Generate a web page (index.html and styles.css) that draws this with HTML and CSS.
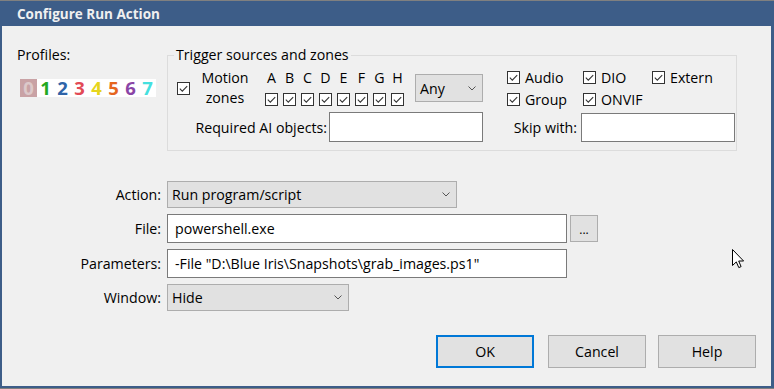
FILE: index.html
```html
<!DOCTYPE html>
<html>
<head>
<meta charset="utf-8">
<title>Configure Run Action</title>
<link rel="stylesheet" href="styles.css">
</head>
<body>
<svg class="defs" width="0" height="0" aria-hidden="true">
  <defs>
    <symbol id="chk" viewBox="0 0 13 13">
      <rect x="0.5" y="0.5" width="12" height="12" fill="#fff" stroke="#333"/>
      <polyline points="2.8,6.6 5.3,9.1 10.2,4.2" fill="none" stroke="#333" stroke-width="1.1"/>
    </symbol>
    <symbol id="chev" viewBox="0 0 8 5">
      <polyline points="0.5,0.5 4,4 7.5,0.5" fill="none" stroke="#555" stroke-width="1"/>
    </symbol>
  </defs>
</svg>
<div class="window">
  <div class="titlebar">Configure Run Action</div>
  <div class="client">
    <div class="top">
      <div class="profiles">
        <div class="profiles-label">Profiles:</div>
        <div class="digits">
          <span class="d d0">0</span><span class="d d1">1</span><span class="d d2">2</span><span class="d d3">3</span><span class="d d4">4</span><span class="d d5">5</span><span class="d d6">6</span><span class="d d7">7</span>
        </div>
      </div>
      <fieldset class="group">
        <legend>Trigger sources and zones</legend>
        <div class="grow1">
          <svg class="cb"><use href="#chk"/></svg>
          <div class="motion-label">Motion<br>zones</div>
          <div class="zones">
            <span>A</span><span>B</span><span>C</span><span>D</span><span>E</span><span>F</span><span>G</span><span>H</span>
            <svg class="cb"><use href="#chk"/></svg><svg class="cb"><use href="#chk"/></svg><svg class="cb"><use href="#chk"/></svg><svg class="cb"><use href="#chk"/></svg><svg class="cb"><use href="#chk"/></svg><svg class="cb"><use href="#chk"/></svg><svg class="cb"><use href="#chk"/></svg><svg class="cb"><use href="#chk"/></svg>
          </div>
          <div class="combo combo-any"><span>Any</span><svg class="chev"><use href="#chev"/></svg></div>
          <div class="sources">
            <div class="src"><svg class="cb"><use href="#chk"/></svg><span>Audio</span></div>
            <div class="src"><svg class="cb"><use href="#chk"/></svg><span>DIO</span></div>
            <div class="src"><svg class="cb"><use href="#chk"/></svg><span>Extern</span></div>
            <div class="src"><svg class="cb"><use href="#chk"/></svg><span>Group</span></div>
            <div class="src"><svg class="cb"><use href="#chk"/></svg><span>ONVIF</span></div>
          </div>
        </div>
        <div class="grow2">
          <span class="lbl-ai">Required AI objects:</span>
          <span class="input input-ai"></span>
          <span class="lbl-skip">Skip with:</span>
          <span class="input input-skip"></span>
        </div>
      </fieldset>
    </div>

    <div class="form">
      <span class="flabel">Action:</span>
      <div class="combo combo-action"><span>Run program/script</span><svg class="chev"><use href="#chev"/></svg></div>

      <span class="flabel">File:</span>
      <div class="file-row">
        <span class="input input-wide">powershell.exe</span>
        <span class="btn btn-browse">...</span>
      </div>

      <span class="flabel">Parameters:</span>
      <span class="input input-wide">-File "D:\Blue Iris\Snapshots\grab_images.ps1"</span>

      <span class="flabel">Window:</span>
      <div class="combo combo-window"><span>Hide</span><svg class="chev"><use href="#chev"/></svg></div>
    </div>

    <div class="buttons">
      <span class="btn btn-ok">OK</span>
      <span class="btn">Cancel</span>
      <span class="btn">Help</span>
    </div>
  </div>
  <svg class="cursor" width="13" height="20" viewBox="0 0 13 20">
    <path d="M0.5,0.5 L0.5,16.5 L4.3,12.9 L6.8,18.6 L9.1,17.6 L6.7,12 L11.6,12 Z" fill="#fff" stroke="#000" stroke-width="1" stroke-linejoin="miter"/>
  </svg>
</div>
</body>
</html>
```
FILE: styles.css
```css
* { box-sizing: border-box; }
html, body { margin: 0; padding: 0; }
body {
  font-family: "Segoe UI", "Open Sans", "Noto Sans", sans-serif;
  font-size: 14.2px;
  color: #000;
  background: #f0f0f0;
}
.defs { position: absolute; width: 0; height: 0; }

.window {
  position: relative;
  width: 774px;
  height: 389px;
  display: flex;
  flex-direction: column;
  background: #3d5d88;
  border-top: 1px solid #808080;
  border-bottom: 1px solid #808080;
  padding: 0 3px 2px 2px;
}
.titlebar {
  height: 25px;
  flex: none;
  color: #f0f0f0;
  font-weight: 700;
  font-size: 13.5px;
  padding-left: 15px;
  display: flex;
  align-items: center;
}
.client {
  flex: 1;
  background: #f0f0f0;
  padding: 19px 15px 0 15px;
  display: flex;
  flex-direction: column;
}

/* top area */
.top { display: flex; }
.profiles { width: 150px; flex: none; }
.profiles-label { line-height: 20px; }
.digits { display: flex; margin: 14px 0 0 3px; }
.d {
  width: 17px;
  height: 18px;
  background: #fff;
  text-align: center;
  font-weight: 700;
  font-size: 18.5px;
  line-height: 18px;
}
.d0 { background: #c9a2a5; color: #dcc9ca; }
.d1 { color: #22a822; }
.d2 { color: #2f64a8; }
.d3 { color: #e24a55; }
.d4 { color: #e6d51c; }
.d5 { color: #e5651f; }
.d6 { color: #8a45a6; }
.d7 { color: #45e0de; }

.group {
  margin: 0;
  width: 570px;
  border: 1px solid #dcdcdc;
  padding: 1px 0 8px 0;
  min-inline-size: 0;
}
.group legend {
  padding: 0 2px;
  margin-left: 6px;
  line-height: 20px;
}
.grow1 {
  display: flex;
  align-items: center;
  height: 44px;
  padding-left: 9px;
}
.cb { width: 13px; height: 13px; flex: none; display: block; }
.motion-label {
  width: 62px;
  margin-left: 4px;
  text-align: center;
  line-height: 20px;
}
.zones {
  margin-left: 9px;
  display: grid;
  grid-template-columns: repeat(8, 13px);
  grid-template-rows: 22px 22px;
  column-gap: 5px;
  align-items: center;
  justify-items: center;
}
.combo {
  display: flex;
  align-items: center;
  justify-content: space-between;
  background: #e1e1e1;
  border: 1px solid #adadad;
  padding: 0 6px 0 4px;
}
.chev { width: 8px; height: 5px; flex: none; }
.combo-any { margin-left: 11px; width: 68px; height: 28px; padding-left: 4px; }
.sources {
  margin-left: 24px;
  display: grid;
  grid-template-columns: 76px 69px auto;
  grid-template-rows: 22px 22px;
  align-items: center;
}
.src { display: flex; align-items: center; gap: 5px; }

.grow2 {
  display: flex;
  align-items: center;
  margin-top: 2px;
  height: 30px;
  padding-left: 9px;
}
.lbl-ai { width: 150px; text-align: right; }
.lbl-skip { width: 94px; text-align: right; }
.input {
  display: flex;
  align-items: center;
  background: #fff;
  border: 1px solid #7a7a7a;
  padding-left: 7px;
  white-space: nowrap;
}
.input-ai { width: 154px; height: 30px; margin-left: 2px; }
.input-skip { width: 154px; height: 29px; margin-left: 4px; }

/* form */
.form {
  margin-top: 30px;
  display: grid;
  grid-template-columns: 144px auto;
  column-gap: 6px;
  row-gap: 6px;
  align-items: center;
  justify-items: start;
}
.flabel { justify-self: end; }
.combo-action { width: 290px; height: 27px; }
.combo-window { width: 182px; height: 27px; }
.file-row { display: flex; align-items: center; gap: 3px; }
.input-wide { width: 400px; height: 29px; }

.btn {
  display: flex;
  align-items: center;
  justify-content: center;
  background: #e1e1e1;
  border: 1px solid #adadad;
  width: 98px;
  height: 33px;
}
.btn-browse { width: 28px; height: 27px; font-size: 12px; align-items: flex-end; padding-bottom: 5px; line-height: 1; }
.btn-ok { border: 2px solid #0078d7; margin-right: 2px; }

.buttons {
  margin-top: 24px;
  display: flex;
  justify-content: flex-end;
  gap: 12px;
}

.cursor { position: absolute; left: 732px; top: 248px; }
```
